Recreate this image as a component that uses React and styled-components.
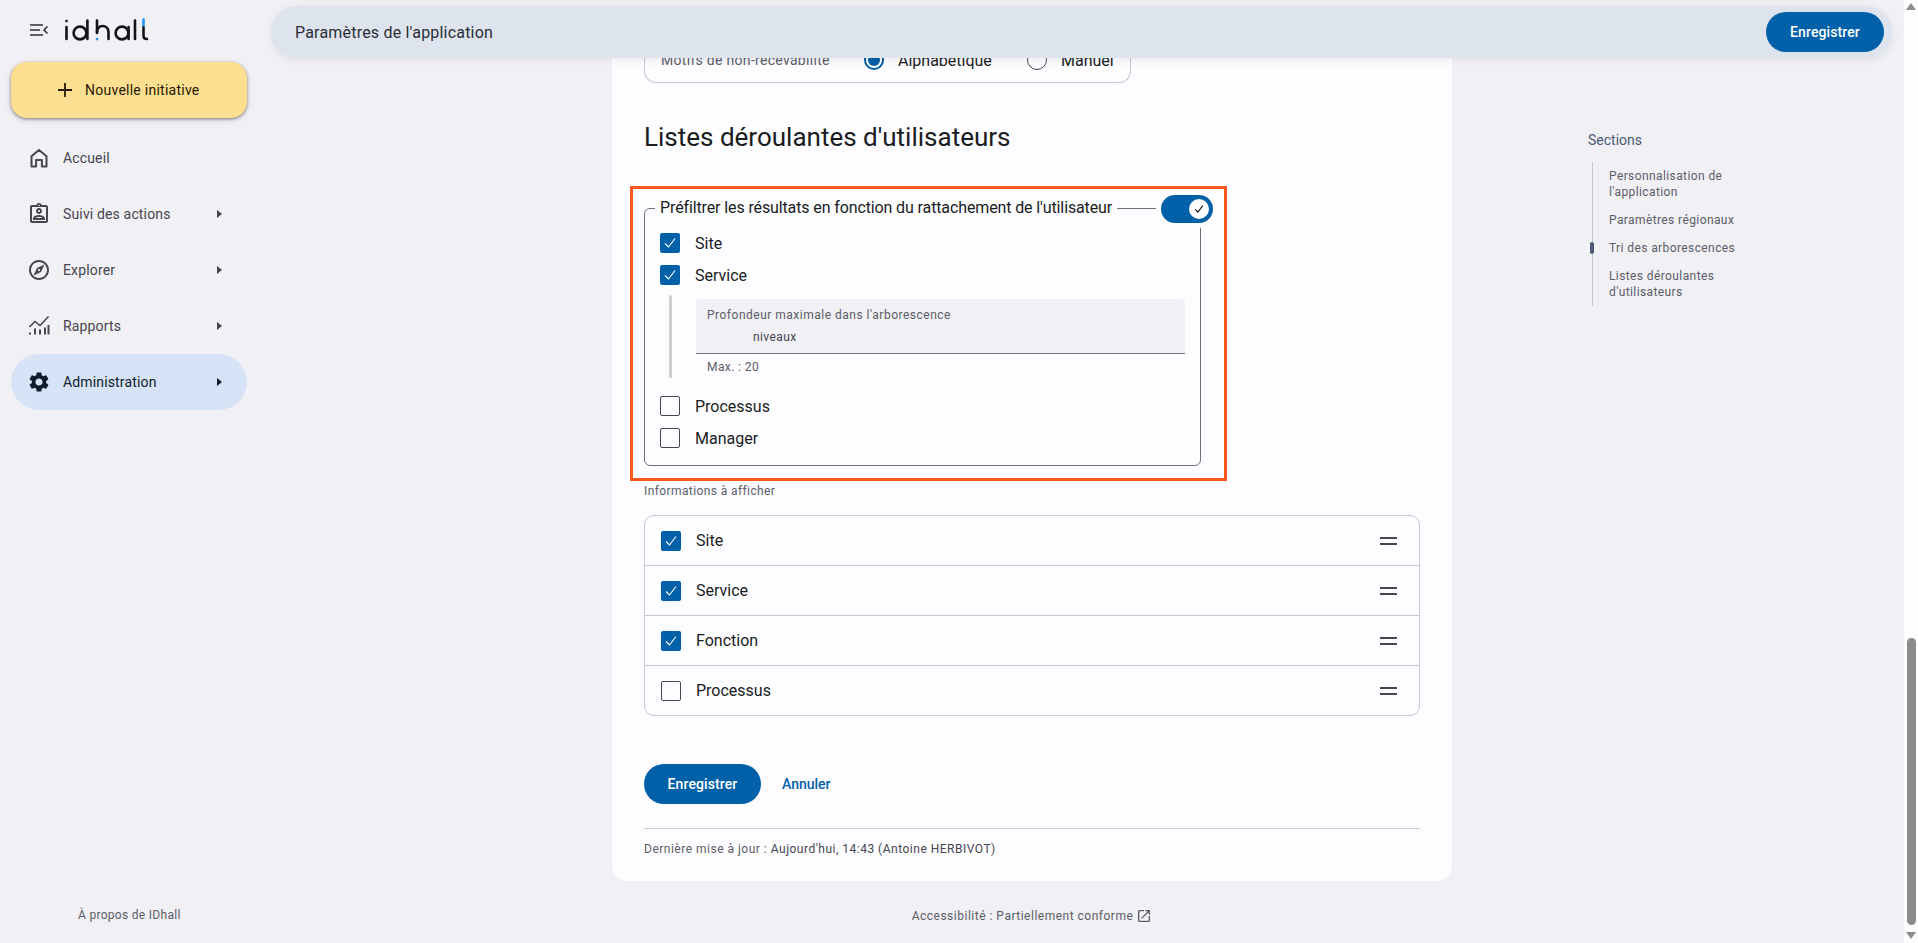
import React from 'react'
import styled, { createGlobalStyle } from 'styled-components'
import { MdOutlineAssignmentInd, MdOutlineExplore, MdSettings, MdOutlineOpenInNew } from 'react-icons/md'

const GlobalStyle = createGlobalStyle`
    html, body {
        margin: 0;
        padding: 0;
        height: 100%;
        overflow: hidden;
        background: #f1f0f5;
    }
    * {
        box-sizing: border-box;
    }
    body {
        font-family: Roboto, "Liberation Sans", sans-serif;
        color: #1a1c1e;
    }
`

const Page = styled.div`
    display: flex;
    height: 943px;
    overflow: hidden;
`

const Sidebar = styled.aside`
    width: 259px;
    flex-shrink: 0;
    display: flex;
    flex-direction: column;
`

const Brand = styled.div`
    height: 62px;
    display: flex;
    align-items: center;
    padding: 0 0 2px 30px;
    gap: 11px;
`

const MenuSlot = styled.span`
    display: flex;
    width: 24px;
`

const NewButton = styled.button`
    width: 236px;
    height: 56px;
    margin-left: 11px;
    border: 0;
    border-radius: 16px;
    background: #fddf91;
    color: #261a00;
    display: flex;
    align-items: center;
    gap: 12px;
    padding: 0 0 0 46px;
    font: 400 14px Roboto, sans-serif;
    letter-spacing: 0.25px;
    box-shadow: 0 1px 3px rgba(0, 0, 0, 0.4), 0 2px 6px rgba(0, 0, 0, 0.15);
`

const Nav = styled.nav`
    margin-top: 12px;
    display: flex;
    flex-direction: column;
`

const NavItem = styled.a`
    width: 236px;
    height: 56px;
    margin-left: 11px;
    padding: 0 25px 0 16px;
    border-radius: 28px;
    display: flex;
    align-items: center;
    gap: 12px;
    font-size: 14px;
    letter-spacing: 0.15px;
    color: ${(p) => (p.$active ? '#0f1c2c' : '#45464f')};
    background: ${(p) => (p.$active ? '#d6e3f7' : 'transparent')};

    svg {
        flex-shrink: 0;
    }
`

const Caret = styled.span`
    margin-left: auto;
    width: 0;
    height: 0;
    border-left: 5px solid currentColor;
    border-top: 4px solid transparent;
    border-bottom: 4px solid transparent;
`

const About = styled.div`
    margin-top: auto;
    padding: 0 0 20px 78px;
    font-size: 12px;
    line-height: 16px;
    letter-spacing: 0.3px;
    color: #5b5d68;
`

const MainColumn = styled.div`
    flex: 1;
    min-width: 0;
    display: flex;
    flex-direction: column;
`

const TopBar = styled.header`
    position: relative;
    z-index: 2;
    height: 52px;
    margin: 6px 12px 0 12px;
    padding: 0 8px 0 24px;
    border-radius: 26px;
    background: #dee4ee;
    display: flex;
    align-items: center;
    justify-content: space-between;
    font-size: 16px;
    letter-spacing: 0.2px;
    color: #2b2e36;
    box-shadow: 0 2px 8px rgba(60, 70, 90, 0.1);
`

const PrimaryButton = styled.button`
    height: 40px;
    width: ${(p) => p.$width}px;
    border: 0;
    border-radius: 20px;
    background: #0060a8;
    color: #fff;
    font: 500 14px Roboto, sans-serif;
    letter-spacing: 0.1px;
`

const Body = styled.div`
    display: flex;
    align-items: flex-start;
    padding-left: 353px;
`

const Center = styled.div`
    width: 840px;
    flex-shrink: 0;
`

const Card = styled.main`
    background: #fdfcff;
    border-radius: 0 0 16px 16px;
    padding: 0 32px 24px;
    height: 823px;
`

const ClippedBox = styled.div`
    width: 487px;
    height: 25px;
    border: 1px solid #c5c6d0;
    border-top: 0;
    border-radius: 0 0 12px 12px;
    padding: 0 0 0 16px;
    overflow: hidden;
    display: flex;
    align-items: flex-start;
    font-size: 16px;
`

const ClippedInner = styled.div`
    height: 24px;
    margin-top: -10px;
    display: flex;
    align-items: center;
`

const MotifLabel = styled.span`
    width: 203px;
    font-size: 14px;
    color: #5b5d68;
    letter-spacing: 0.3px;
`

const Radio = styled.span`
    width: 20px;
    height: 20px;
    border-radius: 50%;
    border: ${(p) => (p.$on ? '2px solid #0060a8' : '1px solid #45464f')};
    display: inline-flex;
    align-items: center;
    justify-content: center;
    margin-right: 14px;

    &::after {
        content: '';
        width: 12px;
        height: 12px;
        border-radius: 50%;
        background: ${(p) => (p.$on ? '#0060a8' : 'transparent')};
    }
`

const RadioText = styled.span`
    width: ${(p) => p.$width}px;
`

const Heading = styled.h2`
    margin: 36px 0 0;
    font-size: 26px;
    line-height: 36px;
    font-weight: 400;
    color: #1a1c1e;
`

const Highlight = styled.div`
    width: 597px;
    height: 295px;
    margin: 31px 0 0 -14px;
    border: 3px solid #f9571b;
    padding: 7px 0 11px 11px;
`

const Frame = styled.fieldset`
    position: relative;
    width: 557px;
    margin: 0;
    padding: 11px 15px 15px 15px;
    border: 1px solid #70717a;
    border-radius: 6px;
    min-inline-size: 0;
`

const Legend = styled.legend`
    margin-left: -5px;
    padding: 0 5px;
    font-size: 16px;
    line-height: 24px;
    letter-spacing: -0.12px;
    color: #1a1c1e;
`

const Toggle = styled.span`
    position: absolute;
    right: -13px;
    top: -25px;
    width: 52px;
    height: 28px;
    border-radius: 14px;
    background: #0060a8;
    box-shadow: 0 0 0 5px #fdfcff;
    display: flex;
    align-items: center;
    justify-content: flex-end;
    padding-right: 4px;
`

const ToggleThumb = styled.span`
    width: 20px;
    height: 20px;
    border-radius: 50%;
    background: #fff;
    display: flex;
    align-items: center;
    justify-content: center;
`

const CheckRow = styled.label`
    height: 24px;
    margin-bottom: 8px;
    display: flex;
    align-items: center;
    gap: 15px;
    font-size: 16px;
    color: #1a1c1e;

    &:last-child {
        margin-bottom: 0;
    }
`

const Box = styled.span`
    width: 20px;
    height: 20px;
    flex-shrink: 0;
    border-radius: 2px;
    background: ${(p) => (p.$on ? '#0060a8' : 'transparent')};
    border: ${(p) => (p.$on ? '0' : '1px solid #45464f')};
    display: flex;
    align-items: center;
    justify-content: center;
`

const Nested = styled.div`
    display: flex;
    gap: 24px;
    margin: 1px 0 16px 9px;
`

const NestedBar = styled.span`
    width: 3px;
    border-radius: 2px;
    background: #cfcfd2;
    flex-shrink: 0;
`

const NestedContent = styled.div`
    flex: 1;
    padding: 4px 0 3px;
`

const Field = styled.div`
    height: 55px;
    background: #f1f0f5;
    border-bottom: 1px solid #70717a;
    border-radius: 4px 4px 0 0;
    padding: 8px 11px 0;
`

const FieldLabel = styled.div`
    font-size: 12px;
    line-height: 16px;
    letter-spacing: 0.5px;
    color: #5b5d68;
`

const FieldValue = styled.div`
    margin: 6px 0 0 46px;
    font-size: 12px;
    line-height: 16px;
    letter-spacing: 0.4px;
    color: #45464f;
`

const Helper = styled.div`
    margin: 5px 0 0 11px;
    font-size: 12px;
    line-height: 16px;
    letter-spacing: 0.4px;
    color: #5b5d68;
`

const SmallTitle = styled.div`
    margin-top: 2px;
    font-size: 12px;
    line-height: 16px;
    letter-spacing: 0.4px;
    color: #5b5d68;
`

const SortList = styled.div`
    margin-top: 16px;
    border: 1px solid #c5c6d0;
    border-radius: 10px;
`

const SortRow = styled.div`
    height: 50px;
    padding: 0 22px 0 16px;
    display: flex;
    align-items: center;
    gap: 15px;
    font-size: 16px;
    color: #1a1c1e;
    border-bottom: 1px solid #c5c6d0;

    &:last-child {
        border-bottom: 0;
        height: 49px;
    }
`

const Handle = styled.span`
    margin-left: auto;
    width: 17px;
    height: 8px;
    border-top: 2px solid #45464f;
    border-bottom: 2px solid #45464f;
`

const Actions = styled.div`
    margin-top: 48px;
    display: flex;
    align-items: center;
    gap: 21px;
`

const CancelLink = styled.a`
    font-size: 14px;
    font-weight: 500;
    color: #0060a8;
`

const Divider = styled.hr`
    margin: 24px 0 0;
    border: 0;
    border-top: 1px solid #c5c6d0;
`

const UpdateLine = styled.div`
    margin-top: 12px;
    font-size: 12px;
    line-height: 16px;
    letter-spacing: 0.5px;
    color: #5b5d68;

    b {
        font-weight: 400;
        color: #45464f;
    }
`

const Footer = styled.footer`
    margin-top: 27px;
    display: flex;
    justify-content: center;
    align-items: center;
    gap: 3px;
    font-size: 12px;
    line-height: 16px;
    letter-spacing: 0.5px;
    color: #5b5d68;
`

const Aside = styled.aside`
    margin-left: 136px;
    padding-top: 72px;
    width: 180px;
`

const AsideTitle = styled.div`
    font-size: 14px;
    line-height: 20px;
    color: #4a5a78;
`

const Rail = styled.ul`
    list-style: none;
    margin: 12px 0 0 4px;
    padding: 6px 0 6px 16px;
    border-left: 1px solid #c5c6d0;
    display: flex;
    flex-direction: column;
    gap: 12px;
    width: 160px;
`

const RailItem = styled.li`
    position: relative;
    font-size: 12px;
    line-height: 16px;
    letter-spacing: 0.4px;
    color: #5b5d68;

    ${(p) =>
        p.$current &&
        `&::before {
            content: '';
            position: absolute;
            left: -19px;
            top: 2px;
            width: 4px;
            height: 12px;
            border-radius: 2px;
            background: #4a5a78;
        }`}
`

const Scrollbar = styled.div`
    width: 14px;
    flex-shrink: 0;
    background: #fdfdfe;
    display: flex;
    flex-direction: column;
    align-items: center;
    padding: 3px 0 4px;
`

const ArrowUp = styled.span`
    width: 0;
    height: 0;
    border-left: 5px solid transparent;
    border-right: 5px solid transparent;
    border-bottom: 7px solid #8c8c8c;
`

const ArrowDown = styled.span`
    width: 0;
    height: 0;
    margin-top: 7px;
    border-left: 5px solid transparent;
    border-right: 5px solid transparent;
    border-top: 7px solid #8c8c8c;
`

const Thumb = styled.span`
    width: 9px;
    height: 287px;
    margin-top: auto;
    border-radius: 5px;
    background: #8c8c8c;
`

const Tick = ({ color = '#fff', size = 16, weight = 1.1 }) => (
    <svg width={size} height={size} viewBox="0 0 16 16" fill="none">
        <path d="M3 8.5 6.5 12 13 3.5" stroke={color} strokeWidth={weight} />
    </svg>
)

const CheckBox = ({ on }) => <Box $on={on}>{on && <Tick />}</Box>

const Logo = () => (
    <svg width="84" height="24" viewBox="0 0 84 24" fill="none" stroke="#111418" strokeWidth="2.6" strokeLinecap="round">
        <path d="M1.5 3v.1M1.5 9v12" />
        <circle cx="15" cy="15" r="6.4" />
        <path d="M22.4 2.5V21" />
        <path d="M32 2.5V15" />
        <path d="M32 21v.1" stroke="#2196f3" />
        <path d="M32 14c0-4 2.5-6 5.5-6s6 2 6 6v7" />
        <circle cx="57" cy="15" r="6.4" />
        <path d="M63.6 9v12" />
        <path d="M70 2.5V21" />
        <path d="M78.5 9v9c0 2 1 3 3.5 3" />
        <path d="M78.5 1.5V7" stroke="#2196f3" />
    </svg>
)

const MenuIcon = () => (
    <svg width="18" height="12" viewBox="0 0 18 12" fill="none" stroke="#2b2e36" strokeWidth="1.5">
        <path d="M0 1h13M0 6h10M0 11h13M17.5 2.5 14 6l3.5 3.5" />
    </svg>
)

const PlusIcon = () => (
    <svg width="16" height="16" viewBox="0 0 16 16" fill="none" stroke="#261a00" strokeWidth="1.8">
        <path d="M8 1v14M1 8h14" />
    </svg>
)

const HomeIcon = () => (
    <svg width="24" height="24" viewBox="0 0 24 24" fill="none" stroke="#45464f" strokeWidth="2" strokeLinejoin="round">
        <path d="M4.5 10.3 12 4l7.5 6.3V20.5h-4.6v-6.6H9.1v6.6H4.5z" />
    </svg>
)

const ReportIcon = () => (
    <svg width="24" height="24" viewBox="0 0 24 24" fill="none" stroke="#45464f" strokeWidth="2">
        <path d="M3 20.5v-2M8 20.5v-6M13 20.5v-5M18 20.5v-7M21.5 20.5V11" />
        <path d="M2.5 13 8 7.5l5 4 8.5-9" strokeWidth="1.6" />
    </svg>
)

const navItems = [
    { label: 'Accueil', icon: <HomeIcon /> },
    { label: 'Suivi des actions', icon: <MdOutlineAssignmentInd size={24} />, caret: true },
    { label: 'Explorer', icon: <MdOutlineExplore size={24} />, caret: true },
    { label: 'Rapports', icon: <ReportIcon />, caret: true },
    { label: 'Administration', icon: <MdSettings size={24} color="#0f1c2c" />, caret: true, active: true },
]

const sortRows = [
    { label: 'Site', on: true },
    { label: 'Service', on: true },
    { label: 'Fonction', on: true },
    { label: 'Processus', on: false },
]

export default function App() {
    return (
        <Page>
            <GlobalStyle />
            <Sidebar>
                <Brand>
                    <MenuSlot><MenuIcon /></MenuSlot>
                    <Logo />
                </Brand>
                <NewButton><PlusIcon />Nouvelle initiative</NewButton>
                <Nav>
                    {navItems.map((item) => (
                        <NavItem key={item.label} $active={item.active}>
                            {item.icon}
                            {item.label}
                            {item.caret && <Caret />}
                        </NavItem>
                    ))}
                </Nav>
                <About>À propos de IDhall</About>
            </Sidebar>

            <MainColumn>
                <TopBar>
                    Paramètres de l'application
                    <PrimaryButton $width={118}>Enregistrer</PrimaryButton>
                </TopBar>
                <Body>
                    <Center>
                        <Card>
                            <ClippedBox>
                                <ClippedInner>
                                    <MotifLabel>Motifs de non-recevabilité</MotifLabel>
                                    <Radio $on />
                                    <RadioText $width={129}>Alphabétique</RadioText>
                                    <Radio />
                                    <RadioText $width={60}>Manuel</RadioText>
                                </ClippedInner>
                            </ClippedBox>

                            <Heading>Listes déroulantes d'utilisateurs</Heading>

                            <Highlight>
                                <Frame>
                                    <Legend>Préfiltrer les résultats en fonction du rattachement de l'utilisateur</Legend>
                                    <Toggle>
                                        <ToggleThumb><Tick color="#1a1c1e" size={12} weight={1.6} /></ToggleThumb>
                                    </Toggle>
                                    <CheckRow><CheckBox on />Site</CheckRow>
                                    <CheckRow><CheckBox on />Service</CheckRow>
                                    <Nested>
                                        <NestedBar />
                                        <NestedContent>
                                            <Field>
                                                <FieldLabel>Profondeur maximale dans l'arborescence</FieldLabel>
                                                <FieldValue>niveaux</FieldValue>
                                            </Field>
                                            <Helper>Max. : 20</Helper>
                                        </NestedContent>
                                    </Nested>
                                    <CheckRow><CheckBox />Processus</CheckRow>
                                    <CheckRow><CheckBox />Manager</CheckRow>
                                </Frame>
                            </Highlight>

                            <SmallTitle>Informations à afficher</SmallTitle>
                            <SortList>
                                {sortRows.map((row) => (
                                    <SortRow key={row.label}>
                                        <CheckBox on={row.on} />
                                        {row.label}
                                        <Handle />
                                    </SortRow>
                                ))}
                            </SortList>

                            <Actions>
                                <PrimaryButton $width={117}>Enregistrer</PrimaryButton>
                                <CancelLink>Annuler</CancelLink>
                            </Actions>
                            <Divider />
                            <UpdateLine>Dernière mise à jour : <b>Aujourd'hui, 14:43 (Antoine HERBIVOT)</b></UpdateLine>
                        </Card>
                        <Footer>
                            Accessibilité : Partiellement conforme
                            <MdOutlineOpenInNew size={16} />
                        </Footer>
                    </Center>
                    <Aside>
                        <AsideTitle>Sections</AsideTitle>
                        <Rail>
                            <RailItem>Personnalisation de l'application</RailItem>
                            <RailItem>Paramètres régionaux</RailItem>
                            <RailItem $current>Tri des arborescences</RailItem>
                            <RailItem>Listes déroulantes d'utilisateurs</RailItem>
                        </Rail>
                    </Aside>
                </Body>
            </MainColumn>

            <Scrollbar>
                <ArrowUp />
                <Thumb />
                <ArrowDown />
            </Scrollbar>
        </Page>
    )
}
